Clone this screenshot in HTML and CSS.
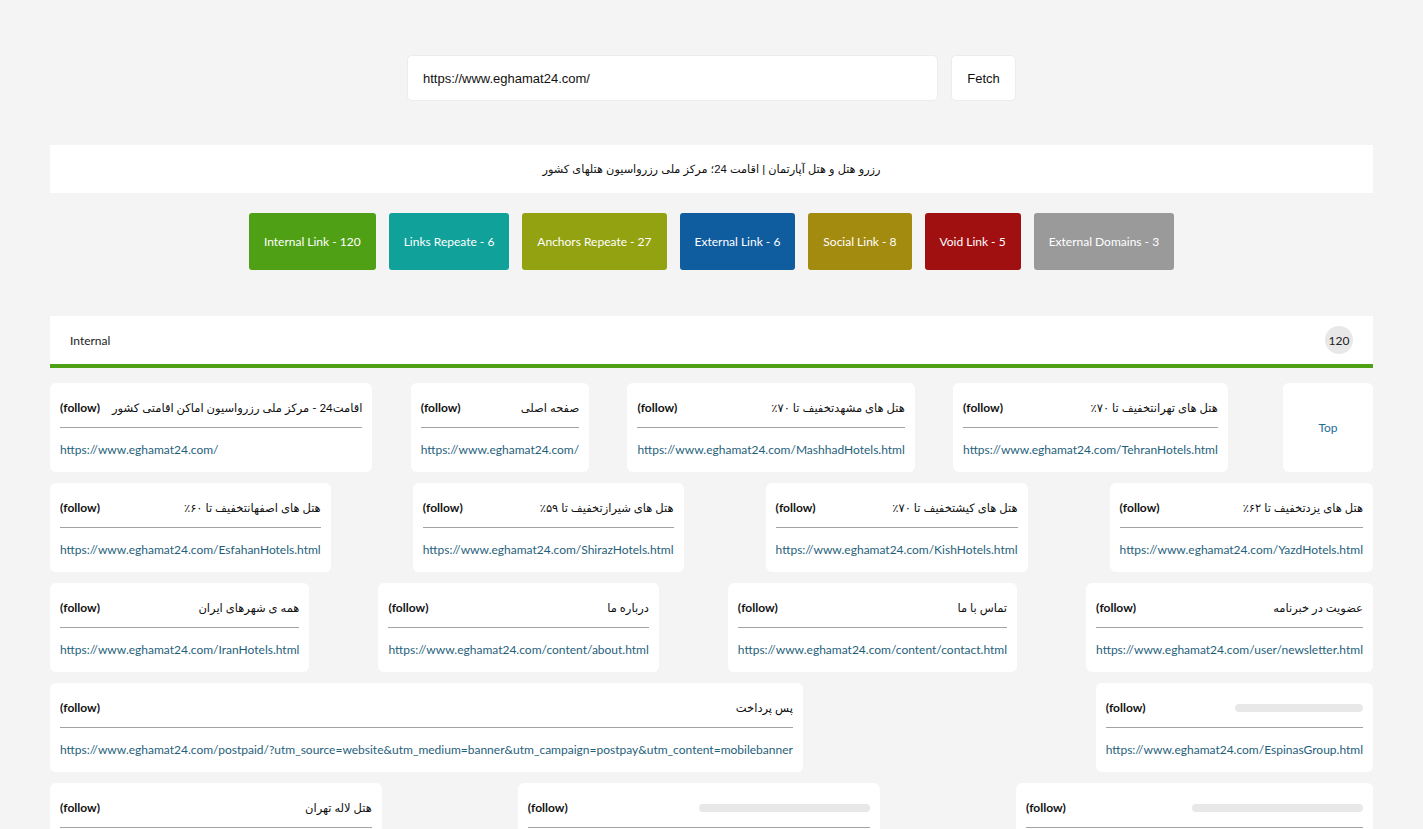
FILE: index.html
```html
<!DOCTYPE html>
<html lang="en">
<head>
<meta charset="utf-8">
<title>Link Checker</title>
<link rel="stylesheet" href="styles.css">
</head>
<body>
<div class="page">
  <form class="search">
    <input class="search-input" type="text" value="https://www.eghamat24.com/">
    <button class="search-btn" type="button">Fetch</button>
  </form>

  <div class="site-title" dir="rtl">رزرو هتل و هتل آپارتمان | اقامت 24؛ مرکز ملی رزرواسیون هتلهای کشور</div>

  <div class="stats">
    <span class="stat stat-internal">Internal Link - 120</span>
    <span class="stat stat-repeat">Links Repeate - 6</span>
    <span class="stat stat-anchor">Anchors Repeate - 27</span>
    <span class="stat stat-external">External Link - 6</span>
    <span class="stat stat-social">Social Link - 8</span>
    <span class="stat stat-void">Void Link - 5</span>
    <span class="stat stat-domains">External Domains - 3</span>
  </div>

  <div class="section-head">
    <span class="section-name">Internal</span>
    <span class="badge">120</span>
  </div>

  <div class="links">
    <div class="row row-first">
      <div class="card">
        <div class="card-head"><span class="anchor">اقامت24 - مرکز ملی رزرواسیون اماکن اقامتی کشور</span><span class="rel">(follow)</span></div>
        <div class="url">https://www.eghamat24.com/</div>
      </div>
      <div class="card">
        <div class="card-head"><span class="anchor">صفحه اصلی</span><span class="rel">(follow)</span></div>
        <div class="url">https://www.eghamat24.com/</div>
      </div>
      <div class="card">
        <div class="card-head"><span class="anchor">هتل های مشهدتخفیف تا ۷۰٪</span><span class="rel">(follow)</span></div>
        <div class="url">https://www.eghamat24.com/MashhadHotels.html</div>
      </div>
      <div class="card">
        <div class="card-head"><span class="anchor">هتل های تهرانتخفیف تا ۷۰٪</span><span class="rel">(follow)</span></div>
        <div class="url">https://www.eghamat24.com/TehranHotels.html</div>
      </div>
      <a class="top-card" href="#">Top</a>
    </div>

    <div class="row">
      <div class="card">
        <div class="card-head"><span class="anchor">هتل های اصفهانتخفیف تا ۶۰٪</span><span class="rel">(follow)</span></div>
        <div class="url">https://www.eghamat24.com/EsfahanHotels.html</div>
      </div>
      <div class="card">
        <div class="card-head"><span class="anchor">هتل های شیرازتخفیف تا ۵۹٪</span><span class="rel">(follow)</span></div>
        <div class="url">https://www.eghamat24.com/ShirazHotels.html</div>
      </div>
      <div class="card">
        <div class="card-head"><span class="anchor">هتل های کیشتخفیف تا ۷۰٪</span><span class="rel">(follow)</span></div>
        <div class="url">https://www.eghamat24.com/KishHotels.html</div>
      </div>
      <div class="card">
        <div class="card-head"><span class="anchor">هتل های یزدتخفیف تا ۶۲٪</span><span class="rel">(follow)</span></div>
        <div class="url">https://www.eghamat24.com/YazdHotels.html</div>
      </div>
    </div>

    <div class="row">
      <div class="card">
        <div class="card-head"><span class="anchor">همه ی شهرهای ایران</span><span class="rel">(follow)</span></div>
        <div class="url">https://www.eghamat24.com/IranHotels.html</div>
      </div>
      <div class="card">
        <div class="card-head"><span class="anchor">درباره ما</span><span class="rel">(follow)</span></div>
        <div class="url">https://www.eghamat24.com/content/about.html</div>
      </div>
      <div class="card">
        <div class="card-head"><span class="anchor">تماس با ما</span><span class="rel">(follow)</span></div>
        <div class="url">https://www.eghamat24.com/content/contact.html</div>
      </div>
      <div class="card">
        <div class="card-head"><span class="anchor">عضویت در خبرنامه</span><span class="rel">(follow)</span></div>
        <div class="url">https://www.eghamat24.com/user/newsletter.html</div>
      </div>
    </div>

    <div class="row">
      <div class="card">
        <div class="card-head"><span class="anchor">پس پرداخت</span><span class="rel">(follow)</span></div>
        <div class="url">https://www.eghamat24.com/postpaid/?utm_source=website&amp;utm_medium=banner&amp;utm_campaign=postpay&amp;utm_content=mobilebanner</div>
      </div>
      <div class="card">
        <div class="card-head"><span class="skeleton"></span><span class="rel">(follow)</span></div>
        <div class="url">https://www.eghamat24.com/EspinasGroup.html</div>
      </div>
    </div>

    <div class="row">
      <div class="card">
        <div class="card-head"><span class="anchor">هتل لاله تهران</span><span class="rel">(follow)</span></div>
        <div class="url">https://www.eghamat24.com/hotel/laleh-hotel-tehran.html</div>
      </div>
      <div class="card">
        <div class="card-head"><span class="skeleton sk-wide"></span><span class="rel">(follow)</span></div>
        <div class="url">https://www.eghamat24.com/hotels/espinas-palace-hotel-tehran</div>
      </div>
      <div class="card">
        <div class="card-head"><span class="skeleton sk-wide"></span><span class="rel">(follow)</span></div>
        <div class="url">https://www.eghamat24.com/hotel/parsian-esteghlal-hotel.html</div>
      </div>
    </div>
  </div>
</div>
</body>
</html>
```

FILE: styles.css
```css
* { box-sizing: border-box; }

html, body {
  margin: 0;
  padding: 0;
  background: #f4f4f4;
  font-family: "Segoe UI", "Lato", "DejaVu Sans", sans-serif;
  font-size: 12px;
  color: #111;
}

.page {
  padding: 55px 50px 40px;
}

.search {
  display: flex;
  justify-content: center;
  gap: 13px;
  margin: 0;
}

.search-input {
  width: 531px;
  height: 46px;
  border: 1px solid #ececec;
  border-radius: 5px;
  background: #fff;
  padding: 0 15px;
  font-family: "Liberation Sans", Arial, sans-serif;
  font-size: 13px;
  color: #111;
  outline: none;
}

.search-btn {
  width: 65px;
  height: 46px;
  border: 1px solid #ececec;
  border-radius: 5px;
  background: #fff;
  font-family: "Liberation Sans", Arial, sans-serif;
  font-size: 13px;
  color: #111;
  padding: 0;
}

.site-title {
  margin-top: 44px;
  height: 48px;
  background: #fff;
  display: flex;
  align-items: center;
  justify-content: center;
  font-family: "Liberation Sans", "DejaVu Sans", sans-serif;
  font-size: 11.3px;
  color: #111;
}

.stats {
  margin-top: 20px;
  display: flex;
  justify-content: center;
  gap: 13px;
}

.stat {
  height: 57px;
  display: flex;
  align-items: center;
  padding: 0 15px;
  border-radius: 3px;
  color: #fff;
  font-size: 12px;
  white-space: nowrap;
}

.stat-internal { background: #4fa014; }
.stat-repeat { background: #10a19a; }
.stat-anchor { background: #93a211; }
.stat-external { background: #0f5c9f; }
.stat-social { background: #a38b0f; }
.stat-void { background: #a11010; }
.stat-domains { background: #9a9a9a; }

.section-head {
  margin-top: 46px;
  height: 52px;
  background: #fff;
  border-bottom: 4px solid #4fa014;
  display: flex;
  align-items: center;
  justify-content: space-between;
  padding: 0 20px;
}

.section-name {
  font-size: 12px;
  color: #222;
}

.badge {
  width: 28px;
  height: 28px;
  border-radius: 50%;
  background: #e8e8e8;
  display: flex;
  align-items: center;
  justify-content: center;
  font-size: 12px;
  color: #222;
}

.links {
  margin-top: 15px;
  display: flex;
  flex-direction: column;
  gap: 11px;
}

.row {
  display: flex;
  justify-content: space-between;
  align-items: flex-start;
}

.card {
  background: #fff;
  border-radius: 6px;
  padding: 10px 10px 12px;
}

.card-head {
  direction: rtl;
  display: flex;
  align-items: center;
  justify-content: space-between;
  gap: 12px;
  border-bottom: 1px solid #a3a3a3;
  height: 35px;
  padding-bottom: 5px;
}

.anchor {
  font-size: 11.5px;
  color: #111;
  white-space: nowrap;
}

.rel {
  font-weight: bold;
  font-size: 12px;
  color: #111;
  white-space: nowrap;
}

.skeleton {
  display: block;
  width: 128px;
  height: 8px;
  border-radius: 4px;
  background: #e8e8e8;
}

.sk-wide {
  width: 171px;
}

.url {
  margin-top: 12px;
  line-height: 20px;
  font-size: 12px;
  color: #1f5f7c;
  white-space: nowrap;
}

.top-card {
  margin-left: 17px;
  width: 90px;
  height: 89px;
  background: #fff;
  border-radius: 6px;
  display: flex;
  align-items: center;
  justify-content: center;
  color: #1c6c98;
  font-size: 12px;
  text-decoration: none;
}
```
